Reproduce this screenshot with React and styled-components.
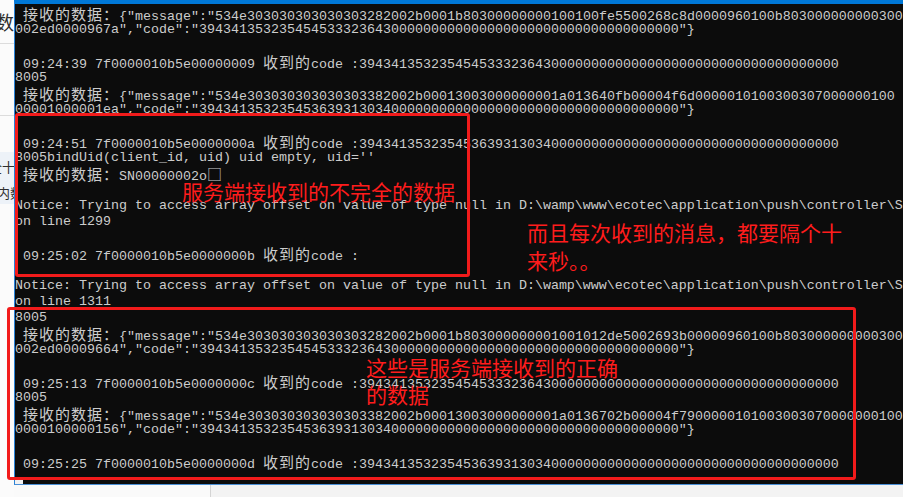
import React from "react";
import styled, { createGlobalStyle } from "styled-components";

const GlobalStyle = createGlobalStyle`
  html, body {
    margin: 0;
    padding: 0;
    background: #f3f3f3;
    overflow: hidden;
  }
  #root {
    width: 903px;
    height: 497px;
  }
`;

const Screen = styled.div`
  position: relative;
  width: 903px;
  height: 497px;
  display: grid;
  grid-template-columns: 14px 1fr;
  grid-template-rows: 485px 12px;
  overflow: hidden;
`;

const BackWindow = styled.div`
  grid-row: 1 / 3;
  background: #fbfbfb;
  overflow: hidden;
  display: flex;
  flex-direction: column;
  font-family: "Noto Sans CJK SC", sans-serif;
  color: #2e2e2e;
`;

const BackCell = styled.div`
  flex: none;
  box-sizing: border-box;
  height: ${p => p.h}px;
  display: flex;
  align-items: center;
  justify-content: flex-end;
  white-space: nowrap;
  overflow: hidden;
  font-size: ${p => p.size || 13}px;
  background: ${p => (p.tint ? "#edf2f8" : "transparent")};
  border-bottom: ${p => (p.line ? "1px solid #dcdcdc" : "none")};

  > span {
    margin-right: ${p => -(p.overhang || 0)}px;
  }
`;

const Console = styled.div`
  position: relative;
  background: #0c0c0c;
  border-top: 4px solid #0078d7;
  border-left: 1px solid #2a82d6;
  border-bottom: 1px solid #4a8fd6;
  padding-top: 2px;
  overflow: hidden;
  color: #cccccc;
  font-family: "Liberation Mono", monospace;
  font-size: 13.333px;
`;

const Row = styled.div`
  height: 16px;
  line-height: 16px;
  white-space: pre;
  overflow: hidden;
`;

const Wide = styled.span`
  font-family: "Noto Sans CJK SC", sans-serif;
  font-size: 15px;
  letter-spacing: 1px;
`;

const ScrollThumb = styled.div`
  position: absolute;
  left: 0;
  bottom: 0;
  width: 8px;
  height: 4px;
  background: #f2f2f2;
`;

const BottomBar = styled.div`
  display: flex;
  background: #f3f3f3;
  box-shadow: inset 0 2px 2px rgba(0, 0, 0, 0.06);
`;

const BottomPane = styled.div`
  width: ${p => p.w}px;
  flex: ${p => (p.w ? "none" : "1")};
  background: ${p => p.bg};
  border-right: ${p => (p.w ? "1px solid #d4d4d4" : "none")};
`;

const Frame = styled.div`
  position: absolute;
  left: ${p => p.x}px;
  top: ${p => p.y}px;
  width: ${p => p.w}px;
  height: ${p => p.h}px;
  box-sizing: border-box;
  border: 3px solid #f21b1b;
  border-radius: 3px;
  pointer-events: none;
`;

const Note = styled.div`
  position: absolute;
  left: ${p => p.x}px;
  top: ${p => p.y}px;
  color: #ff1c1c;
  font-family: "Noto Sans CJK SC", sans-serif;
  font-size: 21px;
  line-height: ${p => p.lh}px;
  white-space: pre;
`;

const Z = "0".repeat(36);
const CODE_A = "394341353235454533323643";
const CODE_B = "394341353235453639313034";
const SN2 = "534e" + "30".repeat(7) + "32" + "82002b000";
const SN3 = "534e" + "30".repeat(7) + "33" + "82002b000";
const NOTICE =
  "Notice: Trying to access array offset on value of type null in D:\\wamp\\www\\ecotec\\application\\push\\controller\\Server.php";

const lines = [
  ` 接收的数据：{"message":"${SN2}1b80300000000100100fe5500268c8d0000960100b803000000000300`,
  `002ed0000967a","code":"${CODE_A}${Z}"}`,
  "",
  ` 09:24:39 7f0000010b5e00000009 收到的code :${CODE_A}${Z}`,
  "8005",
  ` 接收的数据：{"message":"${SN3}13003000000001a013640fb00004f6d0000010100300307000000100`,
  `00001000001ea","code":"${CODE_B}${Z}"}`,
  "",
  ` 09:24:51 7f0000010b5e0000000a 收到的code :${CODE_B}${Z}`,
  "8005bindUid(client_id, uid) uid empty, uid=''",
  " 接收的数据：SN00000002o□",
  "",
  NOTICE,
  "on line 1299",
  "",
  " 09:25:02 7f0000010b5e0000000b 收到的code :",
  "",
  NOTICE,
  "on line 1311",
  "8005",
  ` 接收的数据：{"message":"${SN2}1b803000000001001012de5002693b00000960100b803000000000300`,
  `002ed00009664","code":"${CODE_A}${Z}"}`,
  "",
  ` 09:25:13 7f0000010b5e0000000c 收到的code :${CODE_A}${Z}`,
  "8005",
  ` 接收的数据：{"message":"${SN3}13003000000001a0136702b00004f7900000101003003070000000100`,
  `0000100000156","code":"${CODE_B}${Z}"}`,
  "",
  ` 09:25:25 7f0000010b5e0000000d 收到的code :${CODE_B}${Z}`,
  ""
];

// full-width glyphs take two console cells
const splitWide = text =>
  text
    .split(/([\u3000-\u9fff\uff00-\uffef\u25a1]+)/)
    .map((part, i) => (i % 2 ? <Wide key={i}>{part}</Wide> : part));

export default function App() {
  return (
    <>
      <GlobalStyle />
      <Screen>
        <BackWindow>
          <BackCell h={44} size={19} line>
            <span>数</span>
          </BackCell>
          <BackCell h={72} line />
          <BackCell h={36} />
          <BackCell h={28} tint overhang={1}>
            <span>全十</span>
          </BackCell>
          <BackCell h={24} tint overhang={9}>
            <span>内数</span>
          </BackCell>
        </BackWindow>

        <Console>
          {lines.map((text, i) => (
            <Row key={i}>{splitWide(text)}</Row>
          ))}
          <ScrollThumb />
        </Console>

        <BottomBar>
          <BottomPane w={196} bg="#fafafa" />
          <BottomPane bg="#f3f3f3" />
        </BottomBar>

        <Frame x={15} y={113} w={455} h={164} />
        <Frame x={7} y={307} w={849} h={173} />

        <Note x={182} y={177} lh={28}>
          服务端接收到的不完全的数据
        </Note>
        <Note x={527} y={218} lh={28}>
          {"而且每次收到的消息，都要隔个十\n来秒。。"}
        </Note>
        <Note x={366} y={354} lh={27}>
          {"这些是服务端接收到的正确\n的数据"}
        </Note>
      </Screen>
    </>
  );
}
